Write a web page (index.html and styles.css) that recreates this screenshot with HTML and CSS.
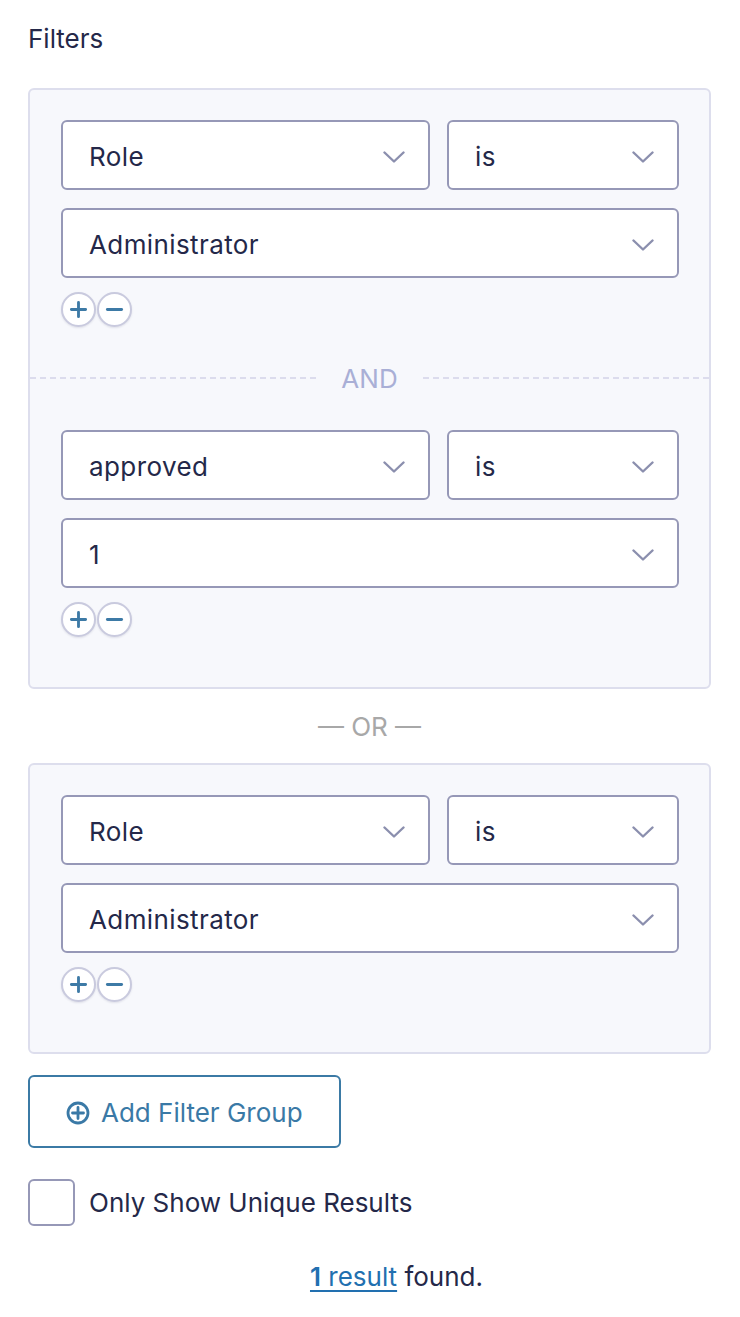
FILE: index.html
```html
<!DOCTYPE html>
<html>
<head>
<meta charset="utf-8">
<link rel="stylesheet" href="styles.css">
</head>
<body>
<div class="page">
  <div class="title">Filters</div>

  <div class="group">
    <div class="filter">
      <div class="select"><span>Role</span><svg class="chev" viewBox="0 0 22 12"><path d="M1.5 1.5 L11 10.5 L20.5 1.5"/></svg></div>
      <div class="select"><span>is</span><svg class="chev" viewBox="0 0 22 12"><path d="M1.5 1.5 L11 10.5 L20.5 1.5"/></svg></div>
      <div class="select full"><span>Administrator</span><svg class="chev" viewBox="0 0 22 12"><path d="M1.5 1.5 L11 10.5 L20.5 1.5"/></svg></div>
      <div class="buttons">
        <span class="circ"><svg viewBox="0 0 20 20"><path d="M10 2.5 V17.5 M2.5 10 H17.5"/></svg></span>
        <span class="circ"><svg viewBox="0 0 20 20"><path d="M2.5 10 H17.5"/></svg></span>
      </div>
    </div>

    <div class="and"><span class="line"></span><span class="and-text">AND</span><span class="line"></span></div>

    <div class="filter">
      <div class="select"><span>approved</span><svg class="chev" viewBox="0 0 22 12"><path d="M1.5 1.5 L11 10.5 L20.5 1.5"/></svg></div>
      <div class="select"><span>is</span><svg class="chev" viewBox="0 0 22 12"><path d="M1.5 1.5 L11 10.5 L20.5 1.5"/></svg></div>
      <div class="select full"><span>1</span><svg class="chev" viewBox="0 0 22 12"><path d="M1.5 1.5 L11 10.5 L20.5 1.5"/></svg></div>
      <div class="buttons">
        <span class="circ"><svg viewBox="0 0 20 20"><path d="M10 2.5 V17.5 M2.5 10 H17.5"/></svg></span>
        <span class="circ"><svg viewBox="0 0 20 20"><path d="M2.5 10 H17.5"/></svg></span>
      </div>
    </div>
  </div>

  <div class="or">— OR —</div>

  <div class="group">
    <div class="filter">
      <div class="select"><span>Role</span><svg class="chev" viewBox="0 0 22 12"><path d="M1.5 1.5 L11 10.5 L20.5 1.5"/></svg></div>
      <div class="select"><span>is</span><svg class="chev" viewBox="0 0 22 12"><path d="M1.5 1.5 L11 10.5 L20.5 1.5"/></svg></div>
      <div class="select full"><span>Administrator</span><svg class="chev" viewBox="0 0 22 12"><path d="M1.5 1.5 L11 10.5 L20.5 1.5"/></svg></div>
      <div class="buttons">
        <span class="circ"><svg viewBox="0 0 20 20"><path d="M10 2.5 V17.5 M2.5 10 H17.5"/></svg></span>
        <span class="circ"><svg viewBox="0 0 20 20"><path d="M2.5 10 H17.5"/></svg></span>
      </div>
    </div>
  </div>

  <div class="add-row">
    <div class="add-btn">
      <svg class="add-icon" viewBox="0 0 24 24"><circle cx="12" cy="12" r="10"/><path d="M12 6.5 V17.5 M6.5 12 H17.5"/></svg>
      <span>Add Filter Group</span>
    </div>
  </div>

  <div class="check-row">
    <span class="checkbox"></span>
    <span class="check-label">Only Show Unique Results</span>
  </div>

  <div class="result"><a class="result-link" href="#"><strong>1</strong> result</a> found.</div>
</div>
</body>
</html>
```

FILE: styles.css
```css
html, body {
  margin: 0;
  padding: 0;
  background: #ffffff;
}

body {
  font-family: Inter, "Noto Sans", "Liberation Sans", sans-serif;
  font-size: 26px;
  color: #242849;
}

.page {
  width: 740px;
  box-sizing: border-box;
  padding: 24px 29px 0 28px;
}

.title {
  line-height: 30px;
  height: 30px;
  margin-bottom: 34px;
}

.group {
  background: #f7f8fc;
  border: 2px solid #dddeed;
  border-radius: 6px;
  padding: 30px 30px 50px 31px;
}

.filter {
  display: grid;
  grid-template-columns: 1fr 232px;
  column-gap: 17px;
  row-gap: 18px;
}

.select {
  height: 70px;
  box-sizing: border-box;
  border: 2px solid #9698b7;
  border-radius: 6px;
  background: #ffffff;
  display: flex;
  align-items: center;
  justify-content: space-between;
  padding: 4px 23px 0 26px;
  line-height: 30px;
  letter-spacing: 0.4px;
}

.select.full {
  grid-column: 1 / span 2;
}

.chev {
  width: 22px;
  height: 12px;
  fill: none;
  stroke: #8b8fae;
  stroke-width: 2.4;
  stroke-linecap: round;
  stroke-linejoin: round;
}

.buttons {
  grid-column: 1 / span 2;
  display: flex;
  gap: 1px;
  margin-top: -4px;
}

.circ {
  width: 35px;
  height: 35px;
  box-sizing: border-box;
  border: 2px solid #c9cade;
  border-radius: 50%;
  background: #ffffff;
  display: flex;
  align-items: center;
  justify-content: center;
  box-shadow: 0 1px 2px rgba(60, 60, 100, 0.12);
}

.circ svg {
  width: 19px;
  height: 19px;
  fill: none;
  stroke: #3d7aa6;
  stroke-width: 3;
  stroke-linecap: round;
}

.and {
  display: flex;
  align-items: center;
  gap: 25px;
  height: 30px;
  margin: 36px -30px 37px -31px;
}

.and .line {
  flex: 1;
  height: 2px;
  background: repeating-linear-gradient(to right, #dcdced 0 6px, transparent 6px 10px);
}

.and-text {
  color: #a9afd6;
  line-height: 30px;
  padding-top: 2px;
}

.or {
  text-align: center;
  color: #a8a8a8;
  line-height: 30px;
  margin: 21px 0 21px;
  padding-top: 2px;
}

.add-row {
  display: flex;
  margin-top: 21px;
}

.add-btn {
  height: 73px;
  box-sizing: border-box;
  border: 2px solid #3b7aa5;
  border-radius: 6px;
  display: flex;
  align-items: center;
  gap: 11px;
  padding: 2px 36px 0;
  color: #3a79a6;
}

.add-icon {
  width: 24px;
  height: 24px;
  fill: none;
  stroke: #3a79a6;
  stroke-width: 2.8;
  stroke-linecap: round;
}

.check-row {
  display: flex;
  align-items: center;
  gap: 14px;
  margin-top: 31px;
}

.checkbox {
  width: 47px;
  height: 47px;
  box-sizing: border-box;
  border: 2px solid #9698b7;
  border-radius: 6px;
  background: #ffffff;
}

.result {
  text-align: center;
  line-height: 30px;
  margin-top: 36px;
  padding-left: 54px;
}

.result-link {
  color: #2270b0;
  text-decoration: underline;
  text-underline-offset: 4px;
  text-decoration-thickness: 2px;
}

.result-link strong {
  font-weight: 600;
}
```
